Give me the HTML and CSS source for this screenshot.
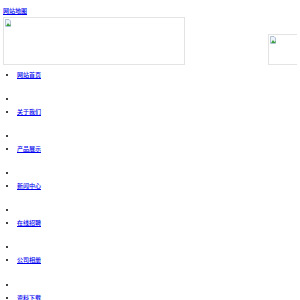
FILE: index.html
```html
<!DOCTYPE html>
<html>
<head>
<meta charset="utf-8">
<link rel="stylesheet" href="styles.css">
</head>
<body>
<div class="top"><a href="#">网站地图</a></div>
<div class="pics">
  <div class="pic pic-main">
    <svg class="broken" width="6" height="8" viewBox="0 0 6 8"><path d="M0.5 0.5h3.5l1.5 1.5v5.5h-5z" fill="#eef3fa" stroke="#9fb3cc" stroke-width="0.8"/><path d="M1 7l2-3 1.5 2 1-1v2z" fill="#3aa03a"/></svg>
  </div>
  <div class="pic pic-side">
    <svg class="broken" width="6" height="8" viewBox="0 0 6 8"><path d="M0.5 0.5h3.5l1.5 1.5v5.5h-5z" fill="#eef3fa" stroke="#9fb3cc" stroke-width="0.8"/><path d="M1 7l2-3 1.5 2 1-1v2z" fill="#3aa03a"/></svg>
  </div>
</div>
<ul class="nav">
  <li class="item"><a href="#">网站首页</a></li>
  <li class="empty"></li>
  <li class="item"><a href="#">关于我们</a></li>
  <li class="empty"></li>
  <li class="item"><a href="#">产品展示</a></li>
  <li class="empty"></li>
  <li class="item"><a href="#">新闻中心</a></li>
  <li class="empty"></li>
  <li class="item"><a href="#">在线招聘</a></li>
  <li class="empty"></li>
  <li class="item"><a href="#">公司相册</a></li>
  <li class="empty"></li>
  <li class="item"><a href="#">资料下载</a></li>
</ul>
</body>
</html>
```
FILE: styles.css
```css
html {
  overflow: hidden;
}
body {
  margin: 3px;
  font-family: "Noto Sans CJK SC", "Noto Sans", sans-serif;
  font-size: 6px;
  font-weight: 500;
  color: #000;
  background: #fff;
}
a {
  color: #0000ee;
  text-decoration: underline;
}
.top {
  height: 12px;
  padding-top: 2px;
  line-height: 12px;
}
.pics {
  display: flex;
  align-items: flex-end;
  width: 400px;
}
.pic {
  box-sizing: border-box;
  border: 1px solid #e3e3e3;
  position: relative;
}
.pic-main {
  width: 182px;
  height: 48px;
}
.pic-side {
  width: 40px;
  height: 31px;
  margin-left: 83px;
}
.broken {
  display: block;
  margin: 1px 0 0 1px;
}
.nav {
  margin: 2.5px 0 0 0;
  padding-left: 14px;
  list-style: disc;
}
.nav li {
  line-height: 13px;
  min-height: 13px;
}
.nav li.item {
  margin-bottom: 11.2px;
}
```
